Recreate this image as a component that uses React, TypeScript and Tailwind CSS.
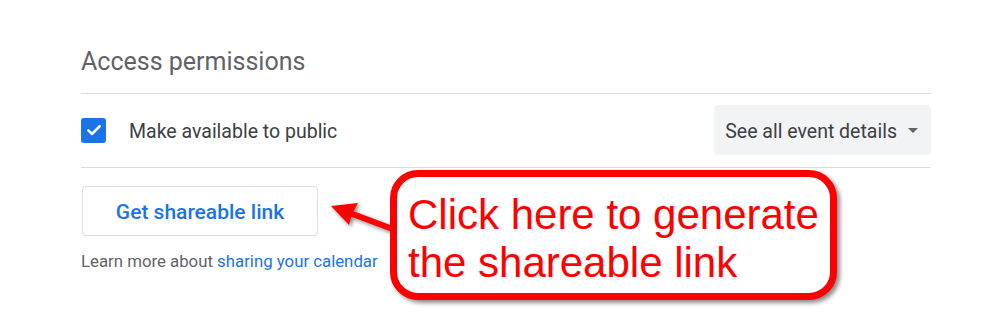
import React from "react";

export default function App() {
  return (
    <div className="relative w-[1000px] h-[334px] bg-white overflow-hidden" style={{ fontFamily: "Roboto, 'Liberation Sans', sans-serif" }}>
      <div className="ml-[81px] w-[850px]">
        <div className="pt-[46px] pb-[15px] border-b border-[#dadce0]">
          <h2 className="text-[25px] leading-[32px] text-[#5f6368]">Access permissions</h2>
        </div>
        <div className="flex items-center justify-between pt-[11px] pb-[12px] border-b border-[#dadce0]">
          <div className="flex items-center">
            <div className="w-[25px] h-[25px] rounded-[3px] bg-[#1a73e8] flex items-center justify-center">
              <svg width="18" height="18" viewBox="0 0 24 24">
                <path d="M4.5 12.5l5 4.8L19.5 7" fill="none" stroke="white" strokeWidth="3.4" strokeLinecap="round" strokeLinejoin="round" />
              </svg>
            </div>
            <span className="ml-[23px] pt-[3px] text-[19.5px] text-[#3c4043]">Make available to public</span>
          </div>
          <div className="h-[50px] flex items-center rounded-[4px] bg-[#f1f3f4] pl-[11px] pr-[13px]">
            <span className="pt-[3px] text-[19.5px] text-[#3c4043]">See all event details</span>
            <svg className="ml-[11px]" width="10" height="5" viewBox="0 0 10 5">
              <path d="M0 0h10L5 5z" fill="#5f6368" />
            </svg>
          </div>
        </div>
        <button className="mt-[18px] ml-[1px] w-[236px] h-[50px] pt-[3px] rounded-[4px] border border-[#dadce0] text-[21px] font-medium text-[#1a73e8]">
          Get shareable link
        </button>
        <p className="mt-[15px] text-[16.8px] leading-[20px] text-[#5f6368]">
          Learn more about <span className="text-[#1a73e8]">sharing your calendar</span>
        </p>
      </div>

      <svg className="absolute left-[320px] top-[190px] drop-shadow-[2px_2px_2px_rgba(0,0,0,0.45)]" width="80" height="50" viewBox="320 190 80 50">
        <line x1="394" y1="229.5" x2="350" y2="213" stroke="#ff0000" strokeWidth="6" />
        <path d="M331 206 L358 203 L352 214 L349 225 Z" fill="#ff0000" />
      </svg>

      <div
        className="absolute left-[390px] top-[170px] w-[447px] h-[130px] rounded-[28px] border-[7px] border-[#ff0000] bg-white shadow-[3px_3px_4px_rgba(0,0,0,0.45)] pl-[11px] pt-[14px] text-[42px] leading-[48px] text-[#ff0000]"
        style={{ fontFamily: "'Liberation Sans', Arial, sans-serif" }}
      >
        <div>Click here to generate</div>
        <div>the shareable link</div>
      </div>
    </div>
  );
}
